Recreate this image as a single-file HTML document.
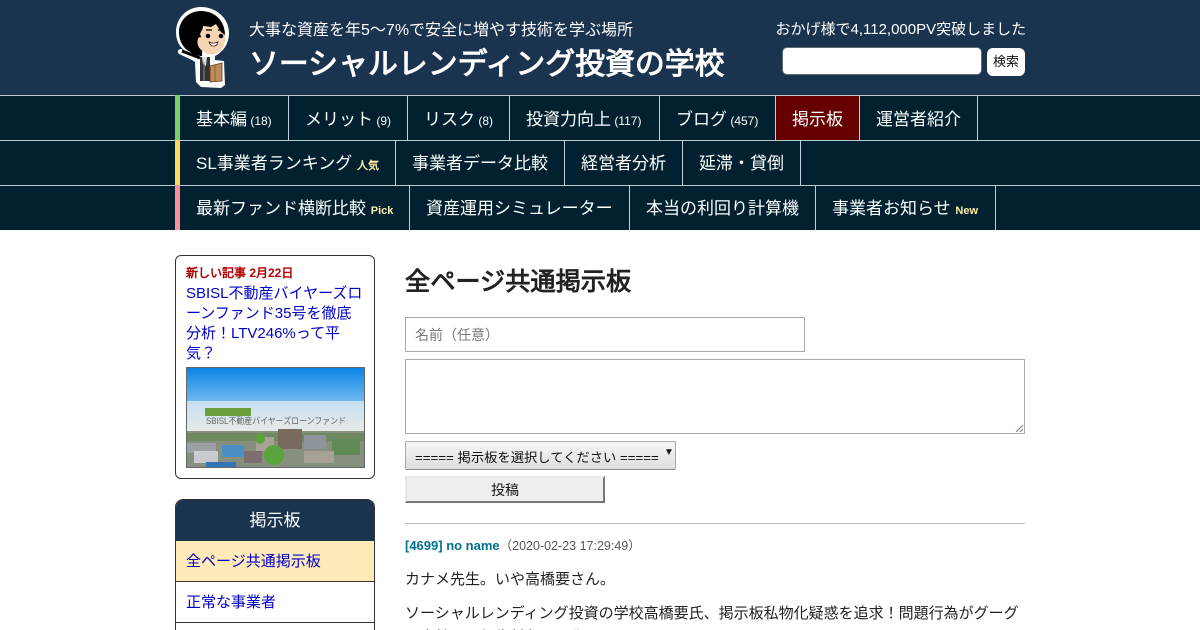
<!DOCTYPE html>
<html lang="ja"><head><meta charset="utf-8"><title>全ページ共通掲示板</title>
<style>
*{box-sizing:border-box}
html,body{margin:0;padding:0;width:1200px;height:630px;overflow:hidden;background:#fff}
body{position:relative;font-family:"Liberation Sans","WenQuanYi Zen Hei",sans-serif;color:#222}
.a{position:absolute;white-space:nowrap}
a{text-decoration:none}
.n{font-family:"Noto Sans CJK JP",sans-serif;line-height:0}
#hd{left:0;top:0;width:1200px;height:95px;background:#1a344f}
.row{left:0;width:1200px;height:45px;background:#012130;border-top:1px solid #b9c9d0}
.bar{left:175px;width:5px;height:45px}
.it{position:absolute;top:0;height:44px;line-height:47px;color:#fff;font-size:17px;border-right:1px solid #c3d0d6;padding-left:16px;white-space:nowrap}
.r2 .it{line-height:45px}
.it small{font-size:12px}
.it b{font-size:11px;color:#fdeea8}
</style></head><body>
<div class="a" id="hd"></div>
<svg class="a" style="left:170px;top:4px" width="62" height="84" viewBox="0 0 62 84">
<path d="M31 3C17 3 6 14 6 28c0 8 3 14 8 18l-3-1c-3 0-4 3-2 5l13 6 3 2 1 20 5 5 20 1 4-3-1-24-9-1v-4c8-4 14-12 14-23C59 14 46 3 31 3z" fill="#fff"/>
<path d="M31 7C18 7 9 17 9 28c0 9 4 16 11 20 4 3 8 4 12 4l1-30 8 2 4-3 5 8 5 2C55 17 45 7 31 7z" fill="#000"/>
<path d="M30 30l4-8 7 1 5-3 5 8 4 3c1 9-3 18-11 19-5 1-9 0-11-3-3-1-7-7-5-12 1-3 4-2 4 0z" fill="#f6d5b5"/>
<circle cx="38" cy="32" r="2.3" fill="#000"/><circle cx="51" cy="32" r="2.3" fill="#000"/>
<path d="M36 26h6M48 26h5" stroke="#000" stroke-width="1.2"/>
<path d="M39 38c3 1.500 6 1.500 9 0-1 5-7 6-9 0z" fill="#fff" stroke="#511" stroke-width=".8"/>
<path d="M12 47l18 7" stroke="#000" stroke-width="3"/>
<path d="M30 53h10v24h-10z" fill="#333"/>
<path d="M32 53h5l-1 9-3-2z" fill="#ddd"/>
<path d="M34 58v19" stroke="#888" stroke-width="1"/>
<path d="M40 62l12-3v18l-12 1z" fill="#bd8b5c" stroke="#5b3d20" stroke-width=".8"/>
<path d="M45 61v16" stroke="#8a6238" stroke-width="1"/>
</svg>
<div class="a" style="left:249px;top:21px;font-size:16px;line-height:20px;color:#fff">大事な資産を年5<span class="n">～</span>7%で安全に増やす技術を学ぶ場所</div>
<div class="a" style="left:249px;top:47px;font-size:29.900px;line-height:36px;font-weight:bold;color:#fff">ソーシャルレンディング投資の学校</div>
<div class="a" style="left:775.500px;top:21px;font-size:15px;line-height:18px;color:#fff">おかげ様で4,112,000PV突破しました</div>
<div class="a" style="left:782px;top:47px;width:200px;height:28px;background:#fff;border:1px solid #5a6b7c;border-radius:5px"></div>
<div class="a" style="left:987px;top:48px;width:38px;height:28px;background:#fff;border-radius:6px;color:#111;font-size:13px;line-height:28px;text-align:center">検索</div>

<div class="a row" style="top:95px"></div>
<div class="a row" style="top:140px"></div>
<div class="a row" style="top:185px"></div>
<div class="a bar" style="top:95px;background:#7fcb68"></div>
<div class="a bar" style="top:140px;background:#fdd85d"></div>
<div class="a bar" style="top:185px;background:#f8919b"></div>

<div class="a" style="left:0;top:96px;width:1200px;height:44px">
<div class="it" style="left:180px;width:109px">基本編<small> (18)</small></div>
<div class="it" style="left:289px;width:119px">メリット<small> (9)</small></div>
<div class="it" style="left:408px;width:102px">リスク<small> (8)</small></div>
<div class="it" style="left:510px;width:150px">投資力向上<small> (117)</small></div>
<div class="it" style="left:660px;width:116px">ブログ<small> (457)</small></div>
<div class="it" style="left:776px;width:84px;background:#660000">掲示板</div>
<div class="it" style="left:860px;width:118px">運営者紹介</div>
</div>
<div class="a r2" style="left:0;top:141px;width:1200px;height:44px">
<div class="it" style="left:180px;width:216px">SL事業者ランキング <b>人気</b></div>
<div class="it" style="left:396px;width:169px">事業者データ比較</div>
<div class="it" style="left:565px;width:118px">経営者分析</div>
<div class="it" style="left:683px;width:118px">延滞<span class="n">・</span>貸倒</div>
</div>
<div class="a r2" style="left:0;top:186px;width:1200px;height:44px">
<div class="it" style="left:180px;width:230px">最新ファンド横断比較 <b>Pick</b></div>
<div class="it" style="left:410px;width:220px">資産運用シミュレーター</div>
<div class="it" style="left:630px;width:186px">本当の利回り計算機</div>
<div class="it" style="left:816px;width:180px">事業者お知らせ <b>New</b></div>
</div>

<div class="a" style="left:175px;top:255px;width:200px;height:224px;border:1px solid #333;border-radius:6px"></div>
<div class="a" style="left:186px;top:265px;font-size:12px;line-height:16px;font-weight:bold;color:#b00000">新しい記事 2月22日</div>
<a class="a" style="left:186px;top:284px;width:179px;font-size:15px;line-height:20px;color:#0000c8;white-space:normal;display:block">SBISL不動産バイヤーズローンファンド35号を徹底分析！LTV246%って平気？</a>
<svg class="a" style="left:186px;top:367px" width="179" height="101" viewBox="0 0 179 101">
<defs><linearGradient id="s" x1="0" y1="0" x2="0" y2="1"><stop offset="0" stop-color="#0a82e6"/><stop offset="1" stop-color="#6db8f0"/></linearGradient>
<linearGradient id="h" x1="0" y1="0" x2="0" y2="1"><stop offset="0" stop-color="#c4dff2"/><stop offset="1" stop-color="#e9ebe6"/></linearGradient></defs>
<rect width="179" height="34" fill="url(#s)"/>
<rect y="34" width="179" height="32" fill="url(#h)"/>
<rect y="64" width="179" height="37" fill="#87907f"/>
<rect x="19" y="41" width="46" height="8" fill="#6aa03c"/>
<text x="20" y="57" font-size="9" fill="#666" textLength="140" lengthAdjust="spacingAndGlyphs" font-family="Liberation Sans,WenQuanYi Zen Hei,sans-serif">SBISL不動産バイヤーズローンファンド</text>
<rect x="0" y="66" width="179" height="8" fill="#6f8a60"/>
<rect x="92" y="62" width="24" height="20" fill="#7a6a5e"/>
<rect x="70" y="70" width="18" height="14" fill="#a9a29a"/>
<rect x="118" y="68" width="22" height="14" fill="#8d949a"/>
<rect x="146" y="72" width="28" height="16" fill="#5f8a55"/>
<rect x="0" y="76" width="30" height="10" fill="#9aa0a3"/>
<rect x="8" y="84" width="24" height="12" fill="#c8ccd0"/>
<rect x="36" y="78" width="22" height="12" fill="#4b8fc4"/>
<rect x="58" y="84" width="18" height="12" fill="#7d6f70"/>
<rect x="118" y="84" width="30" height="12" fill="#a7a196"/>
<circle cx="88" cy="88" r="10" fill="#5ca33c"/>
<circle cx="74" cy="72" r="5" fill="#5ca33c"/>
<rect x="20" y="95" width="30" height="6" fill="#3276b8"/>
<rect x="0.500" y="0.500" width="178" height="100" fill="none" stroke="#666" stroke-width="1"/>
</svg>

<div class="a" style="left:175px;top:499px;width:200px;height:140px;border:1px solid #333;border-radius:8px 8px 0 0;overflow:hidden">
<div style="height:41px;background:#1a344f;color:#fff;font-size:17px;line-height:41px;text-align:center">掲示板</div>
<div style="height:41px;background:#ffeab8;border-bottom:1px solid #333;font-size:15px;line-height:42px;padding-left:10px;color:#0000c8">全ページ共通掲示板</div>
<div style="height:41px;border-bottom:1px solid #333;font-size:15px;line-height:42px;padding-left:10px;color:#0000c8">正常な事業者</div>
</div>

<div class="a" style="left:405px;top:264px;font-size:25.200px;line-height:36px;font-weight:bold;color:#222">全ページ共通掲示板</div>
<div class="a" style="left:405px;top:317px;width:400px;height:35px;border:1px solid #aaa;font-size:14px;line-height:35px;padding-left:9px;color:#777">名前（任意）</div>
<div class="a" style="left:405px;top:359px;width:620px;height:75px;border:1px solid #aaa"></div>
<svg class="a" style="left:1014px;top:423px" width="10" height="10"><path d="M2 9l7-7M6 9l3-3" stroke="#777" stroke-width="1"/></svg>
<div class="a" style="left:405px;top:441px;width:271px;height:29px;background:linear-gradient(#f6f6f6,#dedede);border:1px solid #aaa;border-bottom-color:#888;border-radius:2px;font-size:13.300px;line-height:32px;padding-left:9px;color:#111">===== 掲示板を選択してください =====</div>
<div class="a" style="left:664px;top:447px;font-size:10px;line-height:12px;color:#111">▼</div>
<div class="a" style="left:405px;top:476px;width:200px;height:27px;background:#efefef;border:2px solid;border-color:#e8e8e8 #777 #777 #e8e8e8;font-size:14px;line-height:25px;text-align:center;color:#111">投稿</div>
<div class="a" style="left:405px;top:523px;width:620px;height:1px;background:#bbb"></div>
<div class="a" style="left:405px;top:537px;font-size:12.500px;line-height:18px;color:#555"><b style="color:#00708c;font-size:13px">[4699] no name</b>（2020-02-23 17:29:49）</div>
<div class="a" style="left:405px;top:570px;font-size:15px;line-height:20px;color:#222">カナメ先生。いや高橋要さん。</div>
<div class="a" style="left:405px;top:602px;width:620px;font-size:15px;line-height:24px;color:#222;white-space:normal">ソーシャルレンディング投資の学校高橋要氏、掲示板私物化疑惑を追求！問題行為がグーグル本社への報告対象問題化する恐れ</div>
</body></html>
